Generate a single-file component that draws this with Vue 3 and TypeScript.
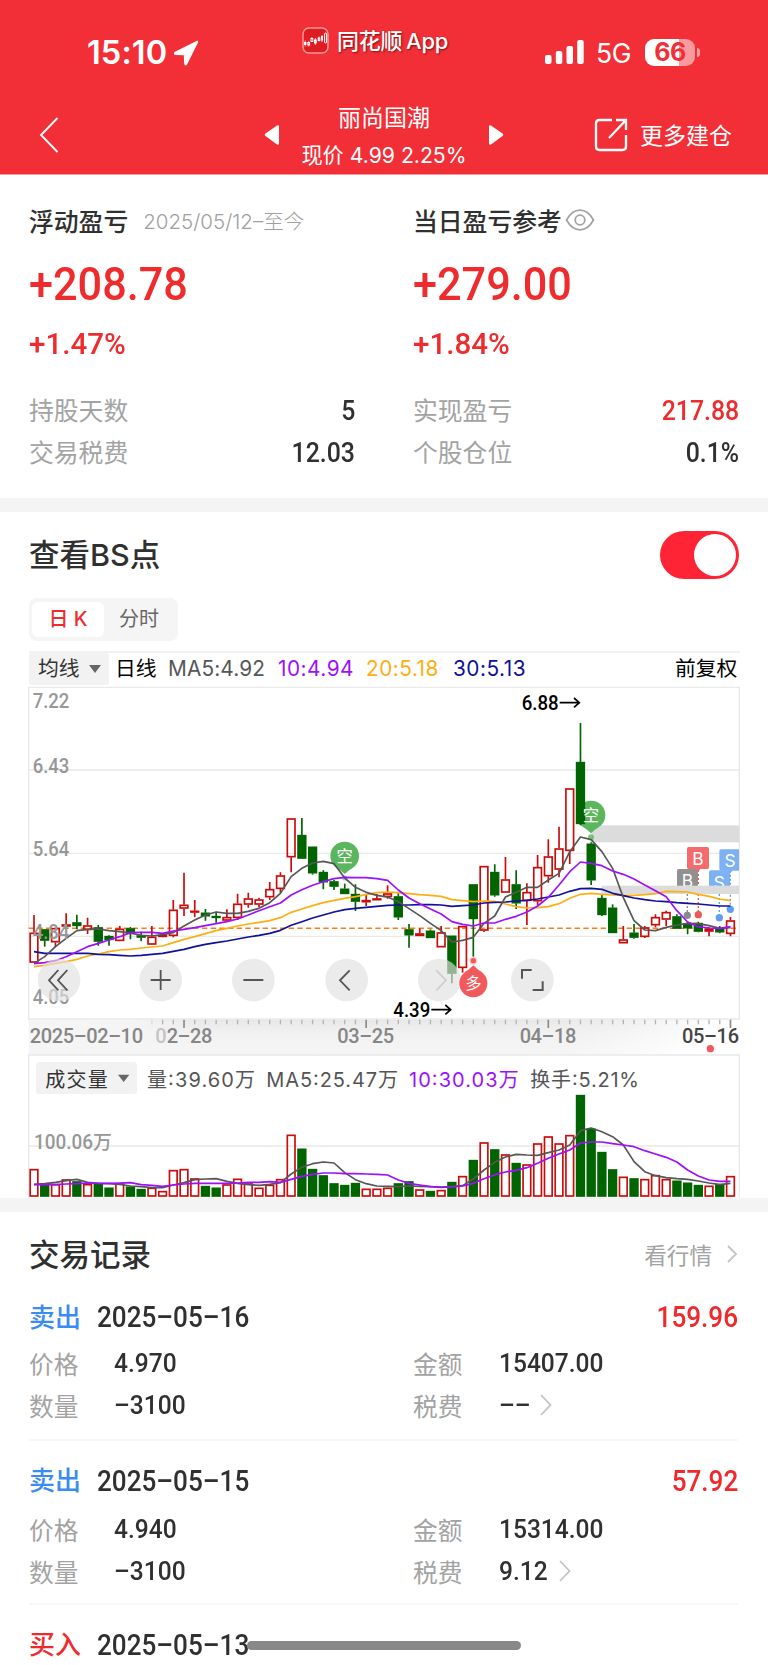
<script setup lang="ts">
type Candle = [high: number, top: number, bottom: number, low: number, up: 0 | 1]

// Chart units are thirds of a pixel; x is measured from the page edge.
const STEP = 32.145
const cx = (i: number): number => 102 + STEP * i

const candles: Candle[] = [
  [705, 758, 848, 848, 1], [748, 748, 782, 800, 0], [744, 744, 787, 802, 1], [700, 733, 740, 742, 1],
  [704, 727, 738, 748, 0], [713, 736, 750, 762, 1], [735, 742, 785, 797, 0], [766, 768, 780, 797, 0],
  [738, 746, 783, 783, 1], [741, 745, 762, 778, 0], [755, 766, 773, 784, 0], [738, 770, 794, 794, 1],
  [760, 765, 770, 772, 1], [660, 689, 768, 772, 1], [578, 674, 686, 708, 1], [660, 692, 698, 711, 1],
  [687, 698, 709, 722, 0], [695, 708, 713, 728, 0], [688, 711, 722, 725, 1], [641, 671, 714, 720, 1],
  [638, 655, 674, 683, 1], [653, 658, 674, 682, 1], [606, 627, 652, 660, 1], [577, 586, 627, 638, 1],
  [415, 415, 532, 577, 1], [414, 465, 536, 536, 0], [500, 500, 580, 584, 0], [571, 576, 607, 628, 0],
  [600, 604, 620, 630, 0], [611, 626, 642, 642, 0], [613, 642, 665, 693, 0], [645, 660, 667, 678, 1],
  [642, 655, 661, 661, 1], [616, 640, 651, 656, 1], [640, 649, 712, 720, 0], [732, 748, 766, 803, 0],
  [745, 760, 768, 768, 1], [748, 752, 774, 774, 0], [738, 757, 802, 802, 1], [767, 767, 881, 910, 0],
  [738, 738, 864, 878, 1], [613, 613, 717, 830, 0], [558, 558, 752, 756, 1], [553, 576, 646, 650, 0],
  [531, 598, 638, 638, 1], [571, 613, 670, 687, 0], [610, 636, 663, 735, 1], [525, 561, 664, 675, 1],
  [478, 529, 589, 608, 1], [440, 505, 569, 592, 1], [325, 325, 513, 552, 1], [129, 246, 432, 436, 0],
  [487, 491, 601, 615, 0], [645, 654, 705, 708, 0], [673, 683, 759, 759, 0], [738, 778, 790, 790, 1],
  [732, 758, 773, 776, 0], [738, 742, 771, 774, 1], [703, 711, 736, 742, 1], [692, 696, 719, 738, 1],
  [703, 709, 746, 746, 0], [725, 730, 745, 763, 0], [725, 729, 755, 757, 0], [742, 746, 755, 769, 1],
  [738, 745, 757, 760, 0], [711, 721, 762, 769, 1],
]

const averages: { color: string; values: number[] }[] = [
  { color: '#ffae12', values: [860, 856, 850, 845, 838, 828, 822, 815, 810, 808, 804, 801, 798, 788, 778, 770, 761, 752, 745, 738, 732, 727, 722, 713, 697, 687, 677, 668, 661, 655, 650, 644, 638, 636, 638, 641, 644, 646, 649, 659, 662, 665, 663, 664, 672, 680, 684, 683, 680, 671, 655, 643, 640, 643, 645, 646, 646, 644, 641, 634, 635, 636, 643, 649, 657, 662] },
  { color: '#10109c', values: [815, 820, 820, 820, 820, 820, 823, 824, 826, 828, 826, 823, 820, 814, 808, 800, 793, 788, 783, 777, 771, 766, 760, 751, 736, 725, 714, 705, 696, 689, 685, 682, 679, 676, 675, 675, 674, 674, 675, 679, 677, 675, 669, 667, 666, 663, 661, 657, 651, 645, 634, 626, 625, 628, 640, 647, 654, 659, 663, 665, 668, 670, 672, 675, 678, 678] },
  { color: '#565656', values: [850, 830, 800, 775, 752, 748, 747, 752, 755, 759, 766, 768, 764, 758, 738, 720, 705, 696, 700, 700, 694, 685, 668, 640, 590, 565, 549, 544, 551, 594, 622, 637, 646, 651, 665, 686, 707, 730, 752, 786, 781, 772, 730, 708, 651, 637, 622, 622, 600, 580, 515, 471, 479, 515, 565, 653, 722, 750, 752, 742, 735, 730, 731, 737, 745, 743] },
  { color: '#9d0fff', values: [851, 848, 842, 830, 815, 800, 790, 780, 770, 758, 757, 757, 760, 753, 748, 743, 737, 731, 725, 717, 705, 692, 680, 669, 645, 629, 616, 605, 596, 592, 593, 593, 596, 601, 630, 654, 671, 687, 702, 725, 733, 738, 729, 729, 718, 709, 696, 678, 652, 615, 575, 546, 550, 557, 573, 583, 597, 615, 632, 650, 692, 726, 740, 744, 745, 740] },
]

const volumes: number[] = [387, 433, 432, 418, 424, 432, 430, 443, 430, 440, 447, 443, 453, 390, 387, 415, 438, 443, 433, 416, 430, 443, 434, 417, 284, 326, 387, 406, 430, 435, 429, 446, 446, 443, 430, 424, 448, 453, 450, 426, 408, 360, 307, 328, 343, 369, 373, 310, 289, 310, 285, 165, 266, 336, 388, 410, 415, 417, 405, 417, 422, 428, 435, 437, 432, 408]

const volumeAverages: { color: string; values: number[] }[] = [
  { color: '#565656', values: [433, 431, 427, 422, 418, 427, 430, 431, 433, 438, 440, 443, 443, 435, 428, 419, 417, 416, 424, 430, 434, 436, 433, 428, 402, 382, 371, 366, 369, 398, 419, 431, 438, 439, 440, 438, 439, 440, 441, 440, 437, 417, 390, 367, 351, 343, 345, 346, 338, 330, 315, 272, 264, 275, 290, 315, 365, 395, 407, 413, 416, 418, 423, 429, 434, 430] },
  { color: '#9d0fff', values: [434, 433, 434, 432, 431, 429, 430, 430, 429, 428, 434, 436, 439, 435, 432, 430, 430, 430, 430, 429, 427, 427, 425, 427, 418, 409, 403, 399, 399, 401, 401, 402, 403, 405, 420, 430, 435, 440, 442, 441, 438, 430, 416, 404, 396, 391, 383, 370, 355, 342, 330, 309, 306, 306, 311, 315, 320, 332, 342, 352, 366, 390, 408, 420, 424, 424] },
]

const line = (values: number[]): string => values.map((v, i) => `${cx(i).toFixed(1)},${v}`).join(' ')

const ticks = candles.map((_, i) => i).filter((i) => i >= 11)
const isMajor = (i: number): boolean => (i - 14) % 17 === 0

const priceLabels = [
  { text: '7.22', y: 83 }, { text: '6.43', y: 278 }, { text: '5.64', y: 528 },
  { text: '4.84', y: 777 }, { text: '4.05', y: 972 },
]

interface Trade {
  side: string
  kind: 'sell' | 'buy'
  date: string
  profit?: string
  price?: string
  amount?: string
  quantity?: string
  fee?: string
}
const trades: Trade[] = [
  { side: '卖出', kind: 'sell', date: '2025–05–16', profit: '159.96', price: '4.970', amount: '15407.00', quantity: '–3100', fee: '––' },
  { side: '卖出', kind: 'sell', date: '2025–05–15', profit: '57.92', price: '4.940', amount: '15314.00', quantity: '–3100', fee: '9.12' },
  { side: '买入', kind: 'buy', date: '2025–05–13' },
]
</script>

<template>
  <main class="page">
    <header class="top">
      <div class="status">
        <div class="clock">
          <span>15:10</span>
          <svg width="26" height="26" viewBox="0 0 26 26"><path d="M23.5 1 2 11.8c-1.800 1-1.400 3 .6 3.100l8.200.3.400 8.600c.1 2 2.200 2.300 3 .5L25 2.400c.5-1.100-.4-1.900-1.500-1.400Z" fill="#fff" /></svg>
        </div>
        <div class="app">
          <svg width="27" height="27" viewBox="0 0 27 27">
            <rect x="1" y="1" width="25" height="25" rx="6" fill="#e01c23" stroke="#f6989b" stroke-width="1.5" />
            <g fill="#fff"><rect x="2" y="15" width="2.400" height="3" /><rect x="12" y="12.500" width="2.800" height="4" /><rect x="19" y="9" width="2" height="4.500" /></g>
            <g fill="#e01c23" stroke="#fff" stroke-width="1"><rect x="5.800" y="15.500" width="1.800" height="2.500" /><rect x="9" y="11.500" width="1.800" height="3" /><rect x="16.200" y="11" width="1.600" height="2.500" /><rect x="22.600" y="6" width="2" height="10" rx="1" /></g>
            <path d="M3.200 13.500v6M13.400 11v7M20 8v7M6.700 14v5.500M9.900 10v1.500M17 9.500v5" stroke="#fff" stroke-width=".7" />
          </svg>
          <span>同花顺 App</span>
        </div>
        <div class="signals">
          <svg width="39" height="25" viewBox="0 0 39 25" fill="#fff"><rect y="15" width="6.500" height="9" rx="2" /><rect x="10.800" y="11" width="6.500" height="13" rx="2" /><rect x="21.500" y="6" width="6.500" height="18" rx="2" /><rect x="32.200" y="0" width="6.500" height="24" rx="2" /></svg>
          <span class="net">5G</span>
          <div class="battery"><span>66</span></div>
          <i class="nub"></i>
        </div>
      </div>
      <nav class="nav">
        <svg class="back" width="20" height="36" viewBox="0 0 20 36"><path d="M18.500 1 2 18l16.500 17" fill="none" stroke="#fff" stroke-width="1.900" /></svg>
        <div class="stock">
          <svg width="16" height="22" viewBox="0 0 16 22"><path d="M13 1.500 1.200 9.700q-1.200 1 0 2.100L13 20.500q2 1 2-1V2.500q0-2-2-1Z" fill="#fff" /></svg>
          <div class="names"><div class="name">丽尚国潮</div><div class="quote">现价 4.99 2.25%</div></div>
          <svg width="16" height="22" viewBox="0 0 16 22"><path d="m3 1.500 11.800 8.200q1.200 1 0 2.100L3 20.500q-2 1-2-1V2.500q0-2 2-1Z" fill="#fff" /></svg>
        </div>
        <div class="more">
          <svg width="34" height="34" viewBox="0 0 34 34" fill="none" stroke="#fff" stroke-width="2.300"><path d="M18 2H5.500Q2 2 2 5.500v23Q2 32 5.500 32h23q3.500 0 3.500-3.500V17M22 2h10v10M32 2 15 20" /></svg>
          <span>更多建仓</span>
        </div>
      </nav>
    </header>

    <section class="summary">
      <div class="col">
        <div class="head"><b>浮动盈亏</b><span class="range">2025/05/12–至今</span></div>
        <div class="big"><span class="num">+208.78</span></div>
        <div class="pct"><span class="num">+1.47%</span></div>
        <div class="kv"><span>持股天数</span><b class="num r">5</b></div>
        <div class="kv"><span>交易税费</span><b class="num r">12.03</b></div>
      </div>
      <div class="col">
        <div class="head">
          <b>当日盈亏参考</b>
          <svg class="eye" width="30" height="22" viewBox="0 0 30 22" fill="none" stroke="#a3a3a3" stroke-width="1.800"><path d="M1.500 11Q7 1.200 15 1.200T28.500 11Q23 20.800 15 20.800T1.500 11Z" /><circle cx="15" cy="11" r="4.800" /></svg>
        </div>
        <div class="big"><span class="num">+279.00</span></div>
        <div class="pct"><span class="num">+1.84%</span></div>
        <div class="kv"><span>实现盈亏</span><b class="num r red">217.88</b></div>
        <div class="kv"><span>个股仓位</span><b class="num r">0.1%</b></div>
      </div>
    </section>

    <section class="chart">
      <div class="bs"><h2>查看BS点</h2><div class="toggle"><i></i></div></div>
      <div class="tabs"><span class="on">日 K</span><span>分时</span></div>
      <div class="legend">
        <span class="pick">均线<i></i></span>
        <span class="day">日线</span>
        <span class="ma5">MA5:4.92</span>
        <span class="ma10">10:4.94</span>
        <span class="ma20">20:5.18</span>
        <span class="ma30">30:5.13</span>
        <span class="adj">前复权</span>
      </div>

      <svg class="plot" width="713" height="513" viewBox="84 15 2139 1539">
        <defs>
          <linearGradient id="axisFade" x1="0" y1="0" x2="1" y2="0.06">
            <stop offset="0" stop-color="#f5f5f5" /><stop offset="0.8" stop-color="#f4f4f4" /><stop offset="1" stop-color="#ffffff" />
          </linearGradient>
          <linearGradient id="axisShade" x1="0" y1="0" x2="0" y2="1">
            <stop offset="0" stop-color="#e6e6e6" /><stop offset="0.8" stop-color="#f4f4f4" stop-opacity="0" />
          </linearGradient>
          <linearGradient id="sides" x1="0" y1="0" x2="1" y2="0">
            <stop offset="0.15" stop-color="#000" /><stop offset="0.24" stop-color="#fff" /><stop offset="0.72" stop-color="#fff" /><stop offset="0.95" stop-color="#000" />
          </linearGradient>
          <mask id="middle" maskUnits="userSpaceOnUse" x="86" y="1018" width="2133" height="106"><rect x="86" y="1018" width="2133" height="106" fill="url(#sides)" /></mask>
          <clipPath id="frame"><rect x="86" y="22" width="2131" height="995" /></clipPath>
        </defs>
        <rect x="86" y="1018" width="2133" height="106" fill="url(#axisFade)" />
        <rect x="86" y="1018" width="2133" height="106" fill="url(#axisShade)" mask="url(#middle)" />
        <g fill="none" stroke="#e9e9e9" stroke-width="4">
          <path d="M86 22H2218V1017H86ZM86 270H2218M86 520H2218M86 769H2218" />
          <path d="M86 1554V1125H2218V1554M86 1398H2218" />
        </g>

        <g fill="#dcdcdc"><rect x="1775" y="436" width="443" height="51" /></g>

        <g clip-path="url(#frame)" class="badges">
          <rect x="2031" y="567" width="63" height="64" rx="5" fill="#919191" />
          <rect x="2127" y="571" width="63" height="64" rx="5" fill="#7db1f4" />
          <path d="M2062 642V706" stroke="#8a8a8a" /><circle cx="2062" cy="706" r="11" fill="#8a8a8a" />
          <path d="M2158 642V713" stroke="#5e9ff2" /><circle cx="2158" cy="713" r="11" fill="#5e9ff2" />
          <path d="M2095 570V704" stroke="#ef5757" /><circle cx="2095" cy="704" r="11" fill="#ef5757" />
          <path d="M2191 572V688" stroke="#5e9ff2" /><circle cx="2191" cy="688" r="11" fill="#5e9ff2" />
          <text x="2062" y="622" class="mark">B</text>
          <text x="2158" y="626" class="mark">S</text>
          <path class="solid" d="M2066 501H2122Q2127 501 2127 506V562Q2127 567 2122 567H2101L2095 575 2089 567H2066Q2061 567 2061 562V506Q2061 501 2066 501Z" fill="#f46b6e" />
          <path class="solid" d="M2163 508H2222V572H2197L2191 580 2185 572H2163Q2158 572 2158 567V513Q2158 508 2163 508Z" fill="#7db1f4" />
          <text x="2094" y="554" class="mark">B</text>
          <text x="2190" y="561" class="mark">S</text>
          <rect x="1805" y="617" width="413" height="25" fill="#dcdcdc" />
        </g>

        <g fill="#5bb75d">
          <circle cx="1034" cy="528" r="43" /><path d="M1010 562 1034 582 1058 562Z" /><circle cx="1034" cy="594" r="8" opacity=".5" />
          <circle cx="1773" cy="405" r="43" /><path d="M1749 439 1773 460 1797 439Z" /><circle cx="1773" cy="472" r="9" opacity=".8" />
        </g>

        <path d="M86 745H2218" stroke="#ff7d14" stroke-width="4.500" stroke-dasharray="16 10" />

        <g v-for="(c, i) in candles" :key="i" :class="c[4] ? 'up' : 'down'">
          <path :d="`M${cx(i)} ${c[0]}V${c[1]}M${cx(i)} ${c[2]}V${c[3]}`" />
          <rect :x="cx(i) - 11.500" :y="c[1] + 2" width="23" :height="Math.max(c[2] - c[1] - 4, 2)" />
        </g>
        <polyline v-for="m in averages" :key="m.color" :points="line(m.values)" :stroke="m.color" class="avg" />

        <text x="1034" y="547" class="pin">空</text>
        <text x="1773" y="424" class="pin">空</text>

        <text v-for="p in priceLabels" :key="p.text" x="98" :y="p.y" textLength="110" lengthAdjust="spacingAndGlyphs" class="axis">{{ p.text }}</text>

        <g class="high">
          <text x="1565" y="89" textLength="111" lengthAdjust="spacingAndGlyphs">6.88</text>
          <path d="M1679 68H1737M1722 54 1738 68 1722 82" />
          <text x="1180" y="1010" textLength="111" lengthAdjust="spacingAndGlyphs">4.39</text>
          <path d="M1294 989H1351M1336 975 1352 989 1336 1003" />
        </g>

        <g class="tools">
          <circle v-for="x in [177, 482, 760, 1040, 1318, 1597]" :key="x" :cx="x" cy="900" r="64" />
          <path d="M175 870 147 901 175 931M202 870 174 901 202 931M452 900H512M482 870V930M730 900H790M1049 871 1020 901 1049 931" />
          <path d="M1309 871 1338 901 1309 931" />
          <path d="M1566 896V870H1595M1628 904V930H1598" />
        </g>
        <g>
          <circle cx="1420" cy="842" r="12" fill="#f05a5c" opacity=".3" /><circle cx="1420" cy="842" r="8" fill="#f05a5c" />
          <circle cx="1420" cy="910" r="42" fill="#f05a5c" /><path d="M1398 876 1420 856 1442 876Z" fill="#f05a5c" />
          <text x="1420" y="928" class="pin">多</text>
        </g>

        <path v-for="i in ticks" :key="i" :d="`M${cx(i)} 1019V${isMajor(i) ? 1044 : 1033}`" :stroke="i < 12 ? '#dcdcdc' : isMajor(i) ? '#8a8a8a' : '#b3b3b3'" :stroke-width="isMajor(i) ? 5 : 4" />
        <g class="dates">
          <text x="89" y="1089" textLength="340">2025–02–10</text>
          <text x="466" y="1089" textLength="32" fill="#c4c4c4">0</text>
          <text x="500" y="1089" textLength="137">2–28</text>
          <text x="1012" y="1089" textLength="170">03–25</text>
          <text x="1559" y="1089" textLength="170">04–18</text>
          <text x="2046" y="1089" textLength="171" class="last">05–16</text>
        </g>

        <g transform="translate(0 1080)">
          <rect x="108" y="66" width="303" height="96" rx="9" fill="#f2f2f2" />
          <path d="M354 104H388L371 126Z" fill="#666" />
          <g class="vol">
            <text x="136" y="140" textLength="187" fill="#333">成交量</text>
            <text x="441" y="140" textLength="324">量:39.60万</text>
            <text x="799" y="140" textLength="395">MA5:25.47万</text>
            <text x="1227" y="140" textLength="329" class="purple">10:30.03万</text>
            <text x="1591" y="140" textLength="326">换手:5.21%</text>
          </g>
          <text x="102" y="327" textLength="234" lengthAdjust="spacingAndGlyphs" class="axis">100.06万</text>
          <rect v-for="(v, i) in volumes" :key="i" :class="candles[i][4] ? 'up' : 'down'" :x="cx(i) - 11.500" :y="v + 2" width="23" :height="466 - v" />
          <polyline v-for="m in volumeAverages" :key="m.color" :points="line(m.values)" :stroke="m.color" class="avg" />
        </g>
        <circle cx="2131" cy="1106" r="11" fill="#f05a5c" />
      </svg>
    </section>

    <section class="records">
      <div class="rec-head">
        <h2>交易记录</h2>
        <div class="quotes">看行情<svg width="12" height="18" viewBox="0 0 12 18"><path d="m2 1 8 8-8 8" fill="none" stroke="#c4c4c4" stroke-width="1.800" /></svg></div>
      </div>
      <article v-for="t in trades" :key="t.date" class="trade">
        <div class="line1"><b :class="t.kind">{{ t.side }}</b><span class="num date">{{ t.date }}</span><span class="num r profit">{{ t.profit }}</span></div>
        <template v-if="t.price">
          <div class="pair"><span>价格</span><b class="num">{{ t.price }}</b><span>金额</span><b class="num">{{ t.amount }}</b></div>
          <div class="pair">
            <span>数量</span><b class="num">{{ t.quantity }}</b><span>税费</span>
            <div class="fee"><b class="num">{{ t.fee }}</b><svg width="14" height="22" viewBox="0 0 14 22"><path d="m2 1 9.500 10L2 21" fill="none" stroke="#c4c4c4" stroke-width="1.800" /></svg></div>
          </div>
        </template>
      </article>
    </section>
    <div class="home"></div>
  </main>
</template>

<style>
body {
  margin: 0;
  background: #fff;
}
</style>

<style scoped>
.page {
  position: relative;
  width: 768px;
  height: 1665px;
  overflow: hidden;
  background: #fff;
  color: #303030;
  font-family: Inter, "Noto Sans CJK SC", sans-serif;
}
h2,
b {
  font-weight: 500;
  margin: 0;
}
.top {
  height: 175px;
  background: #f22f37;
  color: #fff;
  border-bottom: 1px solid #f9989b;
  box-sizing: border-box;
}
.status {
  height: 105px;
  display: grid;
  grid-template-columns: 302px 243px 1fr;
}
.clock {
  display: flex;
  align-items: center;
  gap: 6px;
  padding-left: 87px;
  font-size: 32.500px;
  font-weight: 600;
  letter-spacing: 0.1px;
}
.app {
  display: flex;
  align-items: center;
  gap: 8px;
  height: 80px;
  font-size: 22px;
  font-weight: 500;
  letter-spacing: -0.2px;
  word-spacing: -2px;
  text-shadow: 1px 1px 2px rgba(90, 0, 0, 0.7);
}
.app span {
  margin-top: -3px;
}
.signals {
  display: flex;
  align-items: center;
}
.net {
  margin: 0 13px 0 12px;
  width: 36px;
  font-size: 26.500px;
  letter-spacing: -0.3px;
}
.battery {
  width: 50px;
  height: 27px;
  border-radius: 9px;
  background: linear-gradient(90deg, #fff 67%, #f89b9f 67%);
  color: #f22f37;
  font-size: 25px;
  line-height: 27px;
  font-weight: 700;
  text-align: center;
  letter-spacing: -0.5px;
}
.nub {
  width: 3px;
  height: 9px;
  margin-left: 2px;
  border-radius: 0 4px 4px 0;
  background: #f89b9f;
}
.nav {
  height: 60px;
  display: flex;
  align-items: center;
  padding-left: 39px;
}
.stock {
  display: flex;
  align-items: center;
  margin-left: 205px;
  width: 240px;
  justify-content: space-between;
}
.names {
  padding-top: 4px;
  text-align: center;
  font-weight: 400;
  white-space: nowrap;
}
.name {
  font-size: 23px;
  line-height: 37px;
}
.quote {
  font-size: 21.200px;
  line-height: 37px;
}
.more {
  display: flex;
  align-items: center;
  gap: 12px;
  margin-left: 90px;
  font-size: 23px;
}
.more span {
  margin-top: -2px;
}
.num {
  display: inline-block;
  font-family: Roboto, sans-serif;
  transform: scaleX(0.92);
  transform-origin: left center;
  white-space: nowrap;
}
.num.r {
  transform-origin: right center;
}
.summary {
  height: 323px;
  padding: 0 29px;
  box-sizing: border-box;
  display: grid;
  grid-template-columns: 326px 326px;
  column-gap: 58px;
}
.head {
  display: flex;
  align-items: center;
  height: 91px;
  font-size: 24.800px;
}
.head b {
  margin-top: -2px;
}
.range {
  margin: -2px 0 0 15px;
  font-size: 20.500px;
  color: #a0a0a0;
  font-weight: 300;
}
.eye {
  margin: -1px 0 0 3px;
}
.big {
  height: 32px;
  padding-top: 2px;
  margin-bottom: -2px;
  display: flex;
  align-items: center;
  font-size: 46.500px;
  font-weight: 500;
  color: #ee2c2e;
}
.big .num {
  transform: scaleX(0.93);
}
.pct {
  height: 90px;
  display: flex;
  align-items: center;
  font-size: 30px;
  font-weight: 500;
  color: #ee2c2e;
}
.pct .num {
  transform: scaleX(0.985);
}
.kv {
  height: 42px;
  display: flex;
  align-items: center;
  justify-content: space-between;
  font-size: 24.800px;
  color: #a3a3a3;
}
.kv .num {
  margin-top: 3px;
  font-size: 27px;
  color: #303030;
}
.kv .red {
  color: #ee2c2e;
}
.chart {
  border-top: 14px solid #f4f4f4;
  border-bottom: 14px solid #f4f4f4;
  height: 686px;
  padding: 0 28px 0 29px;
}
.bs {
  height: 86px;
  display: flex;
  align-items: center;
  justify-content: space-between;
}
h2 {
  margin-top: -4px;
  font-size: 30.500px;
}
.toggle {
  width: 79px;
  height: 48px;
  margin-right: 1px;
  box-sizing: border-box;
  border-radius: 24px;
  padding: 3px;
  background: #ff2336;
  display: flex;
  justify-content: flex-end;
}
.toggle i {
  width: 42px;
  height: 42px;
  border-radius: 50%;
  background: #fff;
}
.tabs {
  width: 149px;
  height: 43px;
  box-sizing: border-box;
  padding: 4px 4px 4px 3px;
  border-radius: 8px;
  background: #f5f5f5;
  display: grid;
  grid-template-columns: 72px 70px;
  text-align: center;
  line-height: 35px;
  font-size: 20px;
  color: #666;
}
.tabs .on {
  border-radius: 6px;
  background: #fff;
  color: #ee2c2e;
  font-weight: 500;
}
.legend {
  margin-top: 10px;
  border-top: 2px solid #f2f2f2;
  height: 32px;
  display: grid;
  grid-template-columns: 86px 53px 110px 88px 87px 1fr 65px;
  align-items: center;
  line-height: 32px;
  font-size: 20.800px;
  color: #222;
  white-space: nowrap;
}
.pick {
  width: 80px;
  height: 32px;
  padding-left: 9px;
  box-sizing: border-box;
  border-radius: 3px;
  background: #f2f2f2;
  color: #333;
}
.pick i {
  display: inline-block;
  margin-left: 9px;
  vertical-align: 3px;
  border: 6px solid transparent;
  border-top: 8px solid #666;
  border-bottom: 0;
}
.day,
.adj {
  color: #000;
}
.ma5 {
  color: #565656;
  letter-spacing: 0.150px;
}
.ma10,
.ma20,
.ma30 {
  letter-spacing: 0.500px;
}
.ma10,
.purple {
  color: #9d0fff;
  fill: #9d0fff;
}
.ma20 {
  color: #ffae12;
}
.ma30 {
  color: #10109c;
}
.plot {
  display: block;
  margin: 0 0 0 -1px;
}
.up,
.up rect {
  fill: none;
  stroke: #cc0a0a;
  stroke-width: 5;
}
.down,
.down rect {
  fill: #006400;
  stroke: #006400;
  stroke-width: 5;
}
.avg {
  fill: none;
  stroke-width: 5;
  stroke-linejoin: round;
}
.badges path:not(.solid) {
  stroke-width: 4;
  stroke-dasharray: 6 6;
}
.mark {
  fill: #fff;
  font: 400 52px Inter, sans-serif;
  text-anchor: middle;
}
.pin {
  fill: #fff;
  font: 400 49px "Noto Sans CJK SC", sans-serif;
  text-anchor: middle;
}
.axis {
  fill: #979797;
  font: 500 59px Roboto, "Noto Sans CJK SC", sans-serif;
}
.high text {
  fill: #000;
  font: 500 60px Roboto, sans-serif;
}
.high path {
  fill: none;
  stroke: #000;
  stroke-width: 5;
}
.tools circle {
  fill: rgba(225, 225, 225, 0.65);
}
.tools path {
  fill: none;
  stroke: #555;
  stroke-width: 5.500;
}
.tools path:nth-of-type(2) {
  stroke: #cfcfcf;
}
.tools path:nth-of-type(3) {
  stroke-width: 6;
}
.dates {
  font: 500 60px Roboto, sans-serif;
  fill: #868686;
}
.dates .last {
  fill: #444;
}
.vol {
  font: 400 60px Inter, "Noto Sans CJK SC", sans-serif;
  fill: #555;
}
.records {
  padding: 0 30px 0 29px;
}
.rec-head {
  height: 86px;
  display: flex;
  align-items: center;
  justify-content: space-between;
}
.quotes {
  display: flex;
  align-items: center;
  gap: 14px;
  margin-top: -2px;
  font-size: 22.600px;
  color: #a3a3a3;
}
.trade {
  height: 164px;
  border-bottom: 2px solid #f7f7f7;
  margin-bottom: -1.500px;
  box-sizing: border-box;
}
.trade + .trade {
  padding-top: 20px;
  height: 165.500px;
}
.trade:first-of-type {
  height: 143px;
}
.line1 {
  height: 42px;
  margin-bottom: 6px;
  display: flex;
  align-items: center;
}
.trade:first-of-type .line1 {
  height: 38px;
}
.line1 b {
  width: 68px;
  margin-top: -4px;
  font-size: 26px;
}
.sell {
  color: #3b8cf2;
}
.buy {
  color: #f02a2c;
}
.date,
.profit {
  font-size: 29.500px;
  font-weight: 500;
  transform: scaleX(0.885);
}
.profit {
  margin-left: auto;
  color: #f02a2c;
}
.pair {
  height: 42px;
  display: grid;
  grid-template-columns: 85px 299px 86px 1fr;
  align-items: center;
  font-size: 24.700px;
  color: #a3a3a3;
}
.pair .num {
  font-size: 26.700px;
  color: #303030;
}
.fee {
  display: flex;
  align-items: center;
  gap: 6px;
}
.home {
  position: absolute;
  left: 247px;
  top: 1641px;
  width: 274px;
  height: 9px;
  border-radius: 5px;
  background: #888;
}
</style>
